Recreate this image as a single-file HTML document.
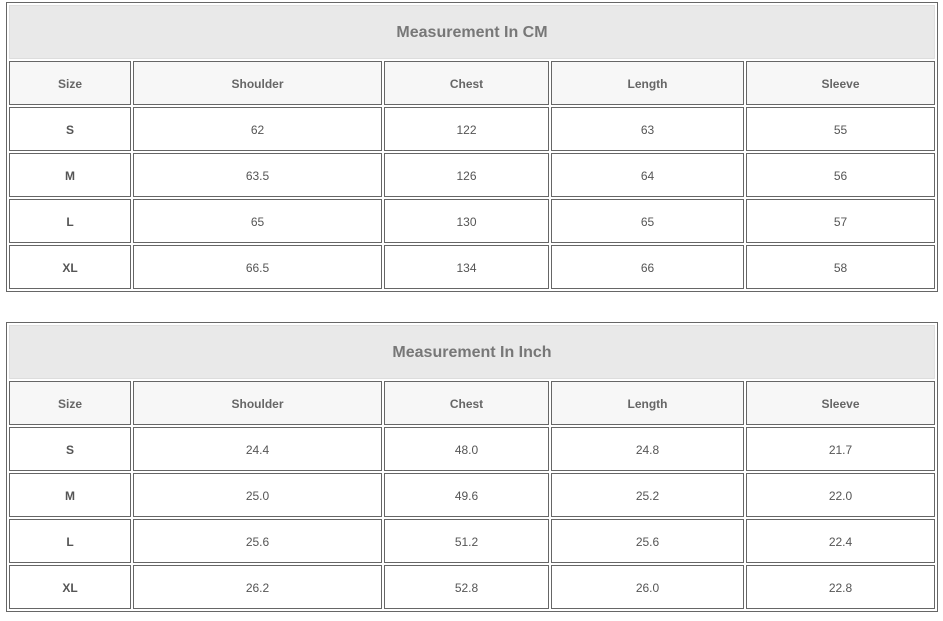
<!DOCTYPE html>
<html><head><style>
body{margin:0;width:943px;height:621px;background:#fff;font-family:"Liberation Sans",Arial,sans-serif;position:relative;overflow:hidden}
.t{position:absolute;left:6px;width:930px;border:1px solid #666;box-sizing:content-box;height:288px}
.c{position:absolute;box-sizing:border-box;border:1px solid #666;display:flex;align-items:center;justify-content:center;font-size:12px;color:#555;padding-top:2px}
.ti{border-color:#ddd;background:#e9e9e9;font-size:16px;font-weight:bold;color:#777}
.h{background:#f7f7f7;font-weight:bold;color:#666}
.b{font-weight:bold;color:#555}
</style></head><body>
<div id="out"></div>
<script>
var cols=[[9,131],[133,382],[384,549],[551,744],[746,935]];
var data=[
["Measurement In CM",[["S","62","122","63","55"],["M","63.5","126","64","56"],["L","65","130","65","57"],["XL","66.5","134","66","58"]]],
["Measurement In Inch",[["S","24.4","48.0","24.8","21.7"],["M","25.0","49.6","25.2","22.0"],["L","25.6","51.2","25.6","22.4"],["XL","26.2","52.8","26.0","22.8"]]]];
var h="";
data.forEach(function(d,k){var o=k*320;
h+='<div class="t" style="top:'+(2+o)+'px"></div>';
h+='<div class="c ti" style="left:9px;width:926px;top:'+(5+o)+'px;height:54px">'+d[0]+'</div>';
var rows=[["Size","Shoulder","Chest","Length","Sleeve"]].concat(d[1]);
rows.forEach(function(r,i){var y=61+i*46+o;
r.forEach(function(v,j){var cl="c"+(i==0?" h":(j==0?" b":""));
h+='<div class="'+cl+'" style="left:'+cols[j][0]+'px;width:'+(cols[j][1]-cols[j][0])+'px;top:'+y+'px;height:44px">'+v+'</div>';});});});
document.getElementById("out").innerHTML=h;
</script>
</body></html>
